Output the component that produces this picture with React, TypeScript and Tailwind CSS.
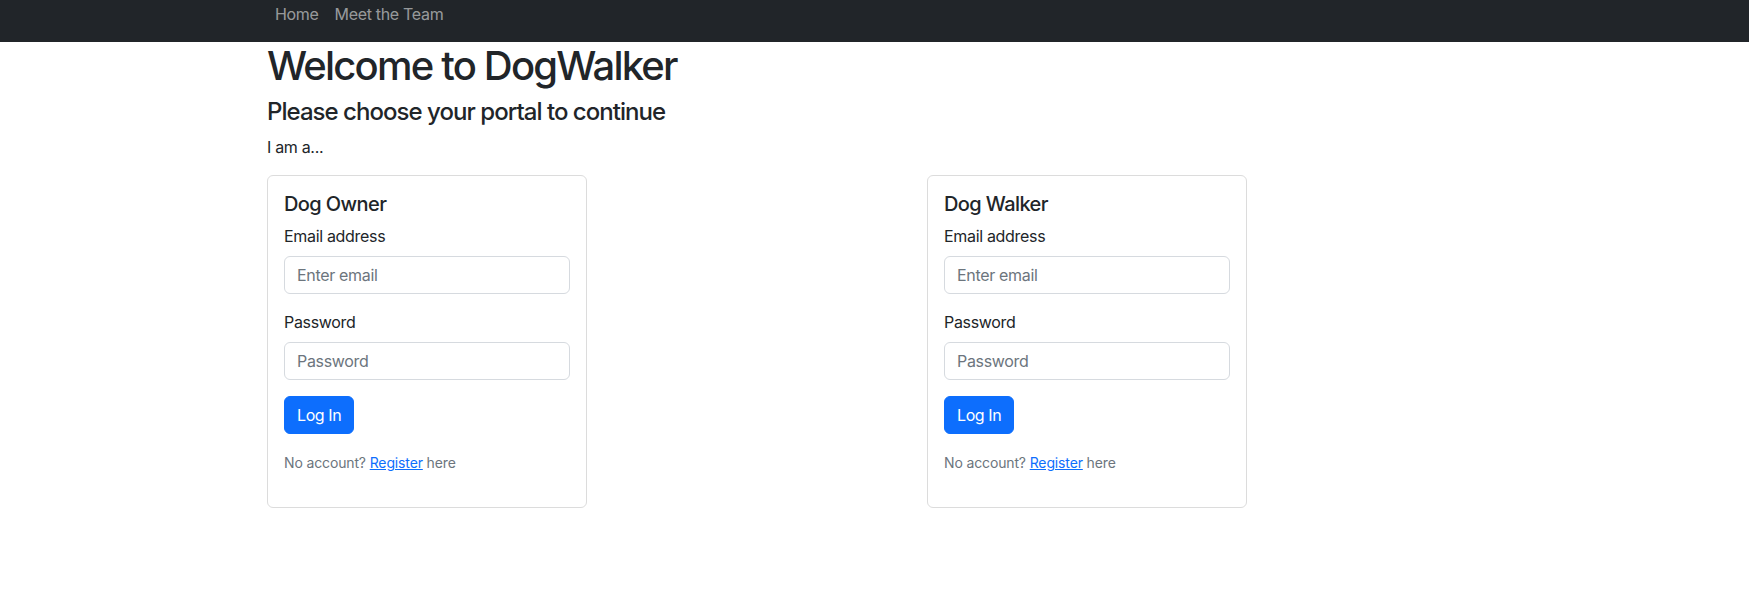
import React from "react";

function PortalCard({ title }: { title: string }) {
  return (
    <div className="w-[320px] rounded-md border border-[#dcdcdc] bg-white p-4">
      <h5 className="mb-2 text-[20px] font-medium leading-[1.2] tracking-[-0.03em] text-[#212529]">{title}</h5>
      <div className="mb-4">
        <label className="mb-2 block text-base leading-6 tracking-[-0.02em] text-[#212529]">Email address</label>
        <input
          type="email"
          placeholder="Enter email"
          className="block w-full rounded-md border border-[#d6dadf] px-3 py-1.5 text-base leading-6 tracking-[-0.02em] text-[#212529] placeholder:text-[#6c757d] outline-none"
        />
      </div>
      <div className="mb-4">
        <label className="mb-2 block text-base leading-6 tracking-[-0.02em] text-[#212529]">Password</label>
        <input
          type="password"
          placeholder="Password"
          className="block w-full rounded-md border border-[#d6dadf] px-3 py-1.5 text-base leading-6 tracking-[-0.02em] text-[#212529] placeholder:text-[#6c757d] outline-none"
        />
      </div>
      <button className="rounded-md border border-[#0d6efd] bg-[#0d6efd] px-3 py-1.5 text-base leading-6 tracking-[-0.025em] text-white">
        Log In
      </button>
      <p className="mt-4 mb-4 text-base leading-6">
        <small className="text-[14px] tracking-[-0.01em] text-[#6c757d]">
          No account?{" "}
          <a href="#" className="text-[#0d6efd] underline">
            Register
          </a>{" "}
          here
        </small>
      </p>
    </div>
  );
}

export default function App() {
  return (
    <div className="min-h-[612px] bg-white font-['Inter','Liberation_Sans',sans-serif] text-[#212529]">
      <nav className="h-[42px] bg-[#212529]">
        <div className="flex pl-[267px] pt-[2px]">
          <a href="#" className="px-2 text-base leading-6 tracking-[-0.02em] text-[rgba(255,255,255,0.55)]">
            Home
          </a>
          <a href="#" className="px-2 text-base leading-6 tracking-[-0.02em] text-[rgba(255,255,255,0.55)]">
            Meet the Team
          </a>
        </div>
      </nav>
      <main className="pl-[267px]">
        <h1 className="mb-2 text-[40px] font-medium leading-[1.2] tracking-[-0.045em]">Welcome to DogWalker</h1>
        <h4 className="mb-2 text-[24px] font-medium leading-[1.2] tracking-[-0.04em]">
          Please choose your portal to continue
        </h4>
        <p className="mb-4 text-base leading-6 tracking-[-0.02em]">I am a...</p>
        <div className="grid grid-cols-[660px_660px]">
          <PortalCard title="Dog Owner" />
          <PortalCard title="Dog Walker" />
        </div>
      </main>
    </div>
  );
}
